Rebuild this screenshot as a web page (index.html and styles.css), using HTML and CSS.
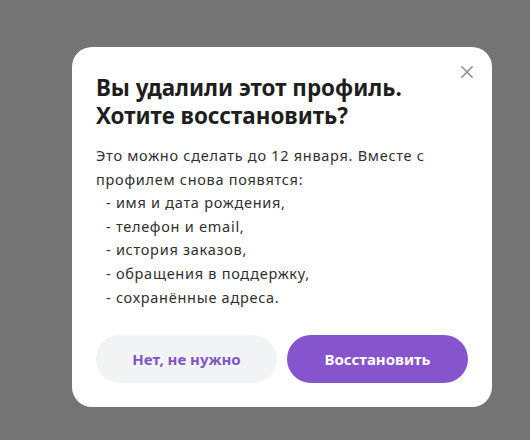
FILE: index.html
```html
<!DOCTYPE html>
<html lang="ru">
<head>
<meta charset="utf-8">
<link rel="stylesheet" href="styles.css">
</head>
<body>
<div class="overlay">
  <div class="modal">
    <button class="close" aria-label="Закрыть">
      <svg width="12" height="12" viewBox="0 0 12 12"><path d="M0.8 0.8L11.2 11.2M11.2 0.8L0.8 11.2" stroke="#8c8c8c" stroke-width="1.5" stroke-linecap="round"/></svg>
    </button>
    <h2 class="title">Вы удалили этот профиль.<br>Хотите восстановить?</h2>
    <p class="text">Это можно сделать до 12 января. Вместе с профилем снова появятся:</p>
    <ul class="list">
      <li>- имя и дата рождения,</li>
      <li>- телефон и email,</li>
      <li>- история заказов,</li>
      <li>- обращения в поддержку,</li>
      <li>- сохранённые адреса.</li>
    </ul>
    <div class="actions">
      <button class="btn btn-secondary">Нет, не нужно</button>
      <button class="btn btn-primary">Восстановить</button>
    </div>
  </div>
</div>
</body>
</html>
```
FILE: styles.css
```css
* { box-sizing: border-box; }
html, body { margin: 0; padding: 0; }
body {
  width: 530px;
  height: 440px;
  background: #747474;
  font-family: "Noto Sans", "Open Sans", sans-serif;
}
.overlay {
  display: flex;
  justify-content: flex-start;
  padding-top: 47px;
  padding-left: 72px;
}
.modal {
  position: relative;
  width: 420px;
  height: 360px;
  background: #fff;
  border-radius: 20px;
  padding: 27px 24px 24px;
}
.close {
  position: absolute;
  top: 15px;
  right: 15px;
  width: 20px;
  height: 20px;
  padding: 0;
  border: 0;
  background: transparent;
  display: flex;
  align-items: center;
  justify-content: center;
}
.title {
  margin: 0 0 14px;
  font-size: 22.4px;
  line-height: 28px;
  font-weight: 700;
  color: #1e1e1e;
}
.text,
.list {
  font-size: 14.5px;
  line-height: 23.6px;
  letter-spacing: 0.72px;
  color: #2f2f2f;
}
.text {
  margin: 0;
  width: 345px;
}
.list {
  list-style: none;
  margin: 0;
  padding: 0 0 0 10px;
}
.actions {
  display: flex;
  gap: 10px;
  margin-top: 25.5px;
}
.btn {
  flex: 1;
  height: 48px;
  border: 0;
  border-radius: 24px;
  font-family: "Noto Sans", "Open Sans", sans-serif;
  font-size: 15px;
  font-weight: 700;
}
.btn-secondary {
  background: #f2f3f5;
  color: #7f56c4;
}
.btn-primary {
  background: #8654cc;
  color: #fff;
}
```
